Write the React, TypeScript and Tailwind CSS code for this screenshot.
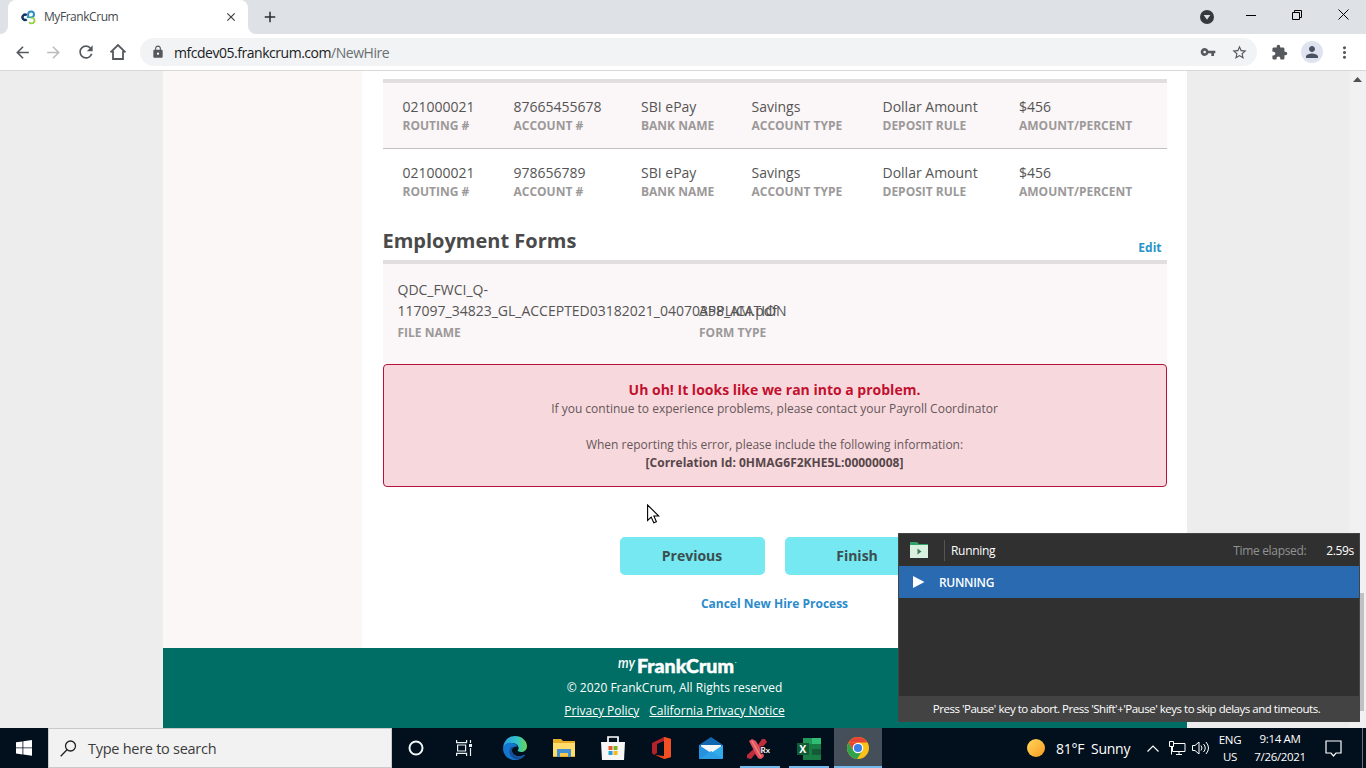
import React from "react";
import {
  MdAdd, MdArrowBack, MdArrowForward, MdClose, MdExtension, MdLock,
  MdMoreVert, MdPerson, MdRefresh, MdStarBorder, MdVpnKey,
} from "react-icons/md";

const deposits = [
  ["021000021", "87665455678", "SBI ePay", "Savings", "Dollar Amount", "$456"],
  ["021000021", "978656789", "SBI ePay", "Savings", "Dollar Amount", "$456"],
];
const labels = ["ROUTING #", "ACCOUNT #", "BANK NAME", "ACCOUNT TYPE", "DEPOSIT RULE", "AMOUNT/PERCENT"];

function TabStrip() {
  return (
    <div className="flex h-[34px] shrink-0 bg-[#dee1e6]">
      <div className="w-2 bg-white"><div className="h-full rounded-br-lg bg-[#dee1e6]" /></div>
      <div className="flex w-[240px] items-center rounded-t-lg bg-white pl-[13px] pr-[10px]">
        <svg className="mr-[8px]" width="15" height="15" viewBox="0 0 15 15" fill="none">
          <path d="M5.800 5.300a2.600 2.600 0 1 0 0 4" stroke="#14355f" strokeWidth="2.400" />
          <path d="M7.200 7.500V4.300a2.900 2.900 0 1 1 3 2.900" stroke="#2a8fc8" strokeWidth="2" />
          <path d="M9.500 7.600h1.200a2.900 2.900 0 1 1-2.600 4.400" stroke="#9bd04a" strokeWidth="1.900" />
          <path d="M5.800 7.300h4.600" stroke="#2aa6a8" strokeWidth="1.600" />
        </svg>
        <span className="text-[12px] tracking-[-0.45px] text-[#45494d]">MyFrankCrum</span>
        <MdClose className="ml-auto text-[#3c4043]" size={14} />
      </div>
      <div className="w-2 bg-white"><div className="h-full rounded-bl-lg bg-[#dee1e6]" /></div>
      <div className="flex flex-1 items-center pl-[5px]">
        <MdAdd size={18} className="text-[#2b2e31]" />
        <svg className="ml-auto mr-[32px]" width="14" height="14" viewBox="0 0 14 14">
          <circle cx="7" cy="7" r="7" fill="#35393d" /><path d="M3.700 5h6.600L7 9.800z" fill="#dee1e6" />
        </svg>
        <svg className="mb-1 mr-[36px]" width="10" height="10" viewBox="0 0 10 10"><path d="M0 5.500h10" stroke="#000" /></svg>
        <svg className="mb-[5px] mr-[36px]" width="10" height="10" viewBox="0 0 10 10" fill="none" stroke="#000"><path d="M.5 2.500h7v7h-7zM2.500 2.500V.500h7v7h-2" /></svg>
        <svg className="mb-[5px] mr-[17px]" width="11" height="11" viewBox="0 0 11 11" fill="none" stroke="#000"><path d="M.5.500l10 10M10.500.500l-10 10" /></svg>
      </div>
    </div>
  );
}

function Toolbar() {
  return (
    <div className="flex h-[37px] shrink-0 items-center border-b border-[#d8d8d8] bg-white pl-[13px] text-[#55595d]">
      <MdArrowBack size={19} />
      <MdArrowForward size={19} className="ml-[12px] text-[#babcbe]" />
      <MdRefresh size={20} className="ml-[13px]" />
      <svg className="ml-[13px]" width="18" height="18" viewBox="0 0 18 18" fill="none" stroke="#55595d" strokeWidth="1.8">
        <path d="M1.500 9.300L9 2l7.500 7.300M4 8v8h10V8" />
      </svg>
      <div className="ml-[13px] flex h-[28px] w-[1117px] items-center rounded-full bg-[#f1f3f4] pl-[11px] pr-[9px]">
        <MdLock size={14} />
        <span className="ml-[9px] text-[14px] tracking-[-0.47px] text-[#202124]">mfcdev05.frankcrum.com<span className="text-[#6b6f73]">/NewHire</span></span>
        <MdVpnKey size={16} className="ml-auto" />
        <MdStarBorder size={17} className="ml-[15px]" />
      </div>
      <MdExtension size={17} className="ml-[14px]" />
      <div className="ml-[13px] flex size-[22px] items-center justify-center rounded-full bg-[#dfe3ef]"><MdPerson size={18} className="text-[#4b5263]" /></div>
      <MdMoreVert size={19} className="ml-[12px]" />
    </div>
  );
}

function DepositRow({ values, shaded }: { values: string[]; shaded: boolean }) {
  return (
    <div className={shaded ? "grid h-[66px] grid-cols-[111px_127.500px_110.5px_131px_136.500px_1fr] border-b border-[#c2c0c1] bg-[#fbf6f7] pl-[19.5px] pt-[14px]" : "grid h-[66px] grid-cols-[111px_127.500px_110.5px_131px_136.500px_1fr] pl-[19.5px] pt-[14px]"}>
      {values.map((v, i) => (
        <div key={labels[i]}>
          <div className="h-[20px] text-[14px] leading-[20px] text-[#555]">{v}</div>
          <div className="text-[12px] font-bold leading-[17px] text-[#9b9999]">{labels[i]}</div>
        </div>
      ))}
    </div>
  );
}

function ErrorBox() {
  return (
    <div className="h-[123px] rounded-[4px] border border-[#b5123a] bg-[#f7d9dd] pr-[1px] pt-[15px] text-center text-[12px] leading-[18px] text-[#66565a]">
      <div className="mb-px text-[14px] font-bold leading-[19px] text-[#c3102f]">Uh oh! It looks like we ran into a problem.</div>
      <div>If you continue to experience problems, please contact your Payroll Coordinator</div>
      <div className="mt-[18px]">When reporting this error, please include the following information:</div>
      <div className="font-bold text-[#574649]">[Correlation Id: 0HMAG6F2KHE5L:00000008]</div>
    </div>
  );
}

function Footer() {
  return (
    <footer className="flex h-[80px] flex-col items-center bg-[#006e64] pr-[1px] pt-[5px] text-[12px] text-white">
      <div className="flex h-[24px] items-center">
        <svg className="ml-[9px] overflow-visible" width="126" height="24" viewBox="0 0 126 24" fill="#fff">
          <text x="2" y="15" fontFamily="Lato" fontStyle="italic" fontSize="15" fontWeight="600" textLength="17" lengthAdjust="spacingAndGlyphs">my</text>
          <text x="21" y="19.500" fontFamily="Lato" fontWeight="900" fontSize="19.500" stroke="#fff" strokeWidth=".5" textLength="97" lengthAdjust="spacingAndGlyphs">FrankCrum</text>
          <path d="M119 9.500h1.500" stroke="#fff" strokeWidth=".6" />
        </svg>
      </div>
      <div className="mt-[2px] leading-[18px]">© 2020 FrankCrum, All Rights reserved</div>
      <div className="mt-[5px] flex gap-[10px] leading-[18px]"><a className="underline">Privacy Policy</a><a className="underline">California Privacy Notice</a></div>
    </footer>
  );
}

function Page() {
  return (
    <div className="flex h-[657px] shrink-0 bg-[#ededed]">
      <div className="w-[163px]" />
      <main className="w-[1024px]">
        <div className="flex h-[577px]">
          <div className="w-[199px] bg-[#fcf7f7]" />
          <div className="w-[825px] bg-white pl-[21px] pr-[20px] pt-[8px]">
            <div className="h-[4px] bg-[#e2dddf]" />
            <DepositRow values={deposits[0]} shaded />
            <DepositRow values={deposits[1]} shaded={false} />
            <div className="flex h-[49px] items-end justify-between border-b-4 border-[#e2dddf] pr-[5.500px]">
              <h2 className="-ml-[0.5px] pb-[5px] text-[20px] font-bold leading-[28px] text-[#4a4a4a]">Employment Forms</h2>
              <a className="pb-[3px] text-[12px] font-bold leading-[18px] text-[#2994c9]">Edit</a>
            </div>
            <div className="flex h-[100px] bg-[#fbf6f7] pl-[14.500px] pt-[15px] text-[14px] leading-[21px] text-[#555]">
              <div className="w-[301.5px] shrink-0">
                <div>QDC_FWCI_Q-</div><div className="whitespace-nowrap">117097_34823_GL_ACCEPTED03182021_04070358_AM.pdf</div>
                <div className="pt-px text-[12px] font-bold text-[#9b9999]">FILE NAME</div>
              </div>
              <div className="pt-[21px]"><div>APPLICATION</div><div className="pt-px text-[12px] font-bold text-[#9b9999]">FORM TYPE</div></div>
            </div>
            <ErrorBox />
            <div className="mt-[50px] flex justify-center gap-[20px]">
              <button className="h-[38px] w-[145px] rounded-[5px] bg-[#75e8f1] pb-[2px] pr-[1px] text-[14px] font-bold text-[#3b4e50]">Previous</button>
              <button className="h-[38px] w-[145px] rounded-[5px] bg-[#75e8f1] pb-[2px] pr-[1px] text-[14px] font-bold text-[#3b4e50]">Finish</button>
            </div>
            <div className="mt-[20px] pr-[1px] text-center text-[12px] font-bold leading-[18px] text-[#2b8bcb]">Cancel New Hire Process</div>
          </div>
        </div>
        <Footer />
      </main>
      <div className="flex-1" />
      <div className="flex w-[17px] flex-col items-center bg-[#f1f1f1] pt-[6px]">
        <svg width="9" height="5" viewBox="0 0 9 5"><path d="M0 5l4.500-5L9 5z" fill="#505050" /></svg>
        <div className="mt-[511px] h-[118px] w-[13px] bg-[#c1c1c1]" />
      </div>
    </div>
  );
}

function RunnerPanel() {
  return (
    <div className="absolute left-[898px] top-[533px] flex h-[189px] w-[462px] flex-col border border-[#444] bg-[#303030] text-[12px] text-white">
      <div className="flex h-[32px] shrink-0 items-center pl-[11px] pr-[5px]">
        <svg width="19" height="18" viewBox="0 0 19 18"><path d="M0 1h7l2 2h9v4H0z" fill="#32a267" /><path d="M0 4h18v13H0z" fill="#d9efe0" /><path d="M7.500 7.500l4 3-4 3z" fill="#3c7d59" /></svg>
        <div className="ml-[15px] h-[21px] w-px bg-[#555]" />
        <span className="ml-[6px] pt-[2px] tracking-[-0.3px]">Running</span>
        <span className="ml-auto mr-[20px] pt-[2px] tracking-[-0.33px] text-[#929292]">Time elapsed:</span>
        <span className="pt-[2px] tracking-[-0.35px]">2.59s</span>
      </div>
      <div className="flex h-[32px] shrink-0 items-center bg-[#296ab1] pl-[14px] font-semibold">
        <svg width="12" height="12" viewBox="0 0 12 12"><path d="M0 0l11.500 6L0 12z" fill="#fff" /></svg>
        <span className="ml-[14px] pt-[2px] tracking-[-0.3px]">RUNNING</span>
      </div>
      <div className="flex-1" />
      <div className="flex h-[25px] items-center justify-center whitespace-nowrap bg-[#434343] pr-[5px] text-[11.500px] tracking-[-0.48px]">Press 'Pause' key to abort. Press 'Shift'+'Pause' keys to skip delays and timeouts.</div>
    </div>
  );
}

function EdgeIcon() {
  return (
    <svg width="24" height="24" viewBox="0 0 24 24">
      <defs>
        <linearGradient id="ea" x1="0" y1="0" x2="1" y2="0"><stop stopColor="#2b9be8" /><stop offset=".6" stopColor="#34c4c8" /><stop offset="1" stopColor="#68d84e" /></linearGradient>
      </defs>
      <path d="M0 12C1 4 6 0 12 0c7 0 12 5 12 10 0 4-3 6-6 6-2 0-4-1-3-2 2-3-1-7-6-7-4 0-8 2-9 5z" fill="url(#ea)" />
      <path d="M0 12c1-4 5-6 9-5 3 0 5 2 5.500 3.500C10 10 8 13 9 16c1 3 5 5 9 4 2-.5 4-1.500 4-1C20 22 16 24 12 24 5 24 0 19 0 12z" fill="#1477cf" />
      <path d="M8 11c-4 5 0 12 6 12.500 4-.5 7-3 8-4.500-5 3-12 1-13-4-.3-2 .5-3.500 1.500-4.500-1-.2-2 0-2.500.5z" fill="#174e98" />
    </svg>
  );
}

function Taskbar() {
  return (
    <div className="flex h-[40px] shrink-0 items-center bg-[#020f1c] text-white">
      <div className="flex w-[48px] justify-center"><svg width="16" height="16" viewBox="0 0 16 16" fill="#fff"><path d="M0 2.300l6.500-.9v6.100H0zM7.300 1.300L16 0v7.500H7.300zM0 8.300h6.500v6.100L0 13.500zM7.300 8.300H16v7.500l-8.700-1.200z" /></svg></div>
      <div className="flex h-[40px] w-[344px] items-center border border-[#c9c9c9] bg-[#f2f2f2] pl-[11px]">
        <svg width="17" height="17" viewBox="0 0 17 17" fill="none" stroke="#222" strokeWidth="1.300"><circle cx="10.500" cy="6" r="5" /><path d="M7 9.800L.7 16.200" /></svg>
        <span className="ml-[11px] pt-[1px] text-[14.500px] tracking-[-0.27px] text-[#3c3c3c]">Type here to search</span>
      </div>
      <div className="flex w-[48px] justify-center"><svg width="16" height="16" viewBox="0 0 16 16"><circle cx="8" cy="8" r="6.500" fill="none" stroke="#f0f7fa" strokeWidth="2" /></svg></div>
      <div className="flex w-[48px] justify-center"><svg width="17" height="16" viewBox="0 0 17 16" fill="none" stroke="#e9f0f4" strokeWidth="1.200"><path d="M.6 0v2.600h10V0M.6 16v-2.600h10V16M1.600 5h8v6h-8zM14.500 0v3M14.500 8v8" /><path d="M13 4h3v3h-3z" fill="#e9f0f4" stroke="none" /></svg></div>
      <div className="flex w-[54px] justify-center"><EdgeIcon /></div>
      <div className="flex w-[44px] justify-center"><svg width="22" height="20" viewBox="0 0 22 20"><path d="M0 1h8l2 2h12v16H0z" fill="#e8ad27" /><path d="M0 5h22v13H0z" fill="#ffdc6b" /><path d="M4 11h14v8h-3v-4H7v4H4z" fill="#428fd2" /><path d="M7 15h8v3H7z" fill="#f3c750" /></svg></div>
      <div className="flex w-[54px] justify-center pr-[1px]"><svg width="24" height="24" viewBox="0 0 24 24"><path d="M7 7V1h10v6" fill="none" stroke="#fff" strokeWidth="1.700" /><path d="M0 6h24l-1 18H1z" fill="#f7f7f7" /><path d="M7.500 10h4v4h-4z" fill="#e65a2b" /><path d="M12.500 10h4v4h-4z" fill="#7bb526" /><path d="M7.500 15h4v4h-4z" fill="#26a0da" /><path d="M12.500 15h4v4h-4z" fill="#f6b81a" /></svg></div>
      <div className="flex w-[44px] justify-center"><svg width="20" height="22" viewBox="0 0 20 22"><path d="M0 6l12-6v4L5 7v9l-3 2-2-2z" fill="#b3222b" /><path d="M12 0l7 2v18l-7 2-9-4 9 1z" fill="#ec4517" /><path d="M12 0l7 2v18l-7 2z" fill="#f25022" /></svg></div>
      <div className="flex w-[52px] justify-center pl-[2px]"><svg width="24" height="22" viewBox="0 0 24 22"><path d="M0 8L12 0l12 8v14H0z" fill="#1267b1" /><path d="M2 8h20v6l-10 4-10-4z" fill="#f4f7fa" /><path d="M0 8l12 8-12 6z" fill="#2591df" /><path d="M24 8l-12 8 12 6z" fill="#32abea" /><path d="M0 22l12-8 12 8z" fill="#2d9fe5" /></svg></div>
      <div className="flex h-[40px] w-[48px] flex-col items-center justify-end">
        <svg className="mb-[6px] mr-[2px] overflow-visible" width="22" height="22" viewBox="0 0 22 22"><path d="M10 7l4-6 3 0 2 3-7 8 4 5-1 3-4 1-4-5-4 5-4-1v-3z" fill="#c12c3a" /><path d="M1 3l3-2 4 2 8 15-3 3-3-1z" fill="#e0545e" /><path d="M4 3l9 16" stroke="#f0868a" strokeWidth="1.200" /><text x="12.500" y="14.500" fill="#fff" stroke="#020f1c" strokeWidth="1.500" paintOrder="stroke" fontFamily="Lato" fontSize="8" fontWeight="700">Rx</text></svg>
        <div className="h-[2px] w-[40px] bg-[#76b9ed]" />
      </div>
      <div className="flex h-[40px] w-[50px] flex-col items-center justify-end">
        <svg className="mb-[6px]" width="24" height="22" viewBox="0 0 24 22"><path d="M6 0h18v22H6z" fill="#187c44" /><path d="M15 0h9v6h-9z" fill="#30bd75" /><path d="M6 0h9v6H6z" fill="#219a59" /><path d="M15 11h9v6h-9z" fill="#145c37" /><path d="M0 5h12v12H0z" fill="#0e5b34" /><text x="2.200" y="14.700" fill="#fff" fontFamily="Open Sans" fontSize="10.500" fontWeight="700">X</text></svg>
        <div className="h-[2px] w-[40px] bg-[#76b9ed]" />
      </div>
      <div className="flex h-[40px] w-[48px] flex-col items-center justify-end bg-[#444f59]">
        <svg className="mb-[7px]" width="22" height="22" viewBox="0 0 22 22"><circle cx="11" cy="11" r="11" fill="#fbc116" /><path d="M1.500 5.500A11 11 0 0 1 20.500 5.500H11z" fill="#e54335" /><path d="M1.500 5.500A11 11 0 0 0 10 22l5.500-8.500H6.300z" fill="#31a24c" /><path d="M1.500 5.500L6.300 13.500 11 5.500z" fill="#e54335" /><circle cx="11" cy="11" r="5.300" fill="#fff" /><circle cx="11" cy="11" r="4.100" fill="#3b80e8" /></svg>
        <div className="h-[2px] w-full bg-[#76b9ed]" />
      </div>
      <div className="ml-auto flex h-full items-center">
        <div className="mr-[11px] size-[18px] rounded-full bg-linear-to-br from-[#ffd75b] to-[#f79a19]" />
        <span className="w-[91px] whitespace-pre pt-[1px] text-[14px] tracking-[-0.25px]">81°F  Sunny</span>
        <svg width="12" height="7" viewBox="0 0 12 7" fill="none" stroke="#fff" strokeWidth="1.200"><path d="M.5 6.500L6 1l5.500 5.500" /></svg>
        <svg className="ml-[10px]" width="17" height="14" viewBox="0 0 17 14" fill="none" stroke="#fff"><path d="M5 2.500h11v8H3.500V6M7 13.500h6M10 11v2M.5.500h4v5h-4zM2.500 5v8.500" /></svg>
        <svg className="ml-[6px]" width="18" height="14" viewBox="0 0 18 14" fill="none" stroke="#fff"><path d="M.500 4.500H3L7 1v12L3 9.500H.500zM9 4.500q2 2.500 0 5M11.500 3q3.500 4 0 8M14 1q5 6 0 12" /></svg>
        <div className="ml-[5px] w-[30px] text-center text-[11.500px] leading-[17px] tracking-[-0.35px]"><div>ENG</div><div>US</div></div>
        <div className="ml-[3px] w-[64px] text-center text-[11.500px] leading-[18px] tracking-[-0.35px]"><div>9:14 AM</div><div>7/26/2021</div></div>
        <svg className="ml-[13px]" width="18" height="17" viewBox="0 0 18 17" fill="none" stroke="#fff" strokeWidth="1.200"><path d="M1 1h15v12h-5l-2.500 3L6 13H1z" /></svg>
        <div className="ml-[19px] h-full w-[4px] border-l border-[#68717a]" />
      </div>
    </div>
  );
}

export default function App() {
  return (
    <div className="relative flex h-[768px] w-[1366px] flex-col overflow-hidden font-['Open_Sans',sans-serif]">
      <TabStrip />
      <Toolbar />
      <Page />
      <Taskbar />
      <RunnerPanel />
      <svg className="absolute left-[647px] top-[504px]" width="13" height="20" viewBox="0 0 13 20"><path d="M.6 1v15.500l3.600-3.400 2.600 5.700 2.600-1.100L6.900 12h4.900z" fill="#fff" stroke="#000" strokeWidth="1.100" /></svg>
    </div>
  );
}
